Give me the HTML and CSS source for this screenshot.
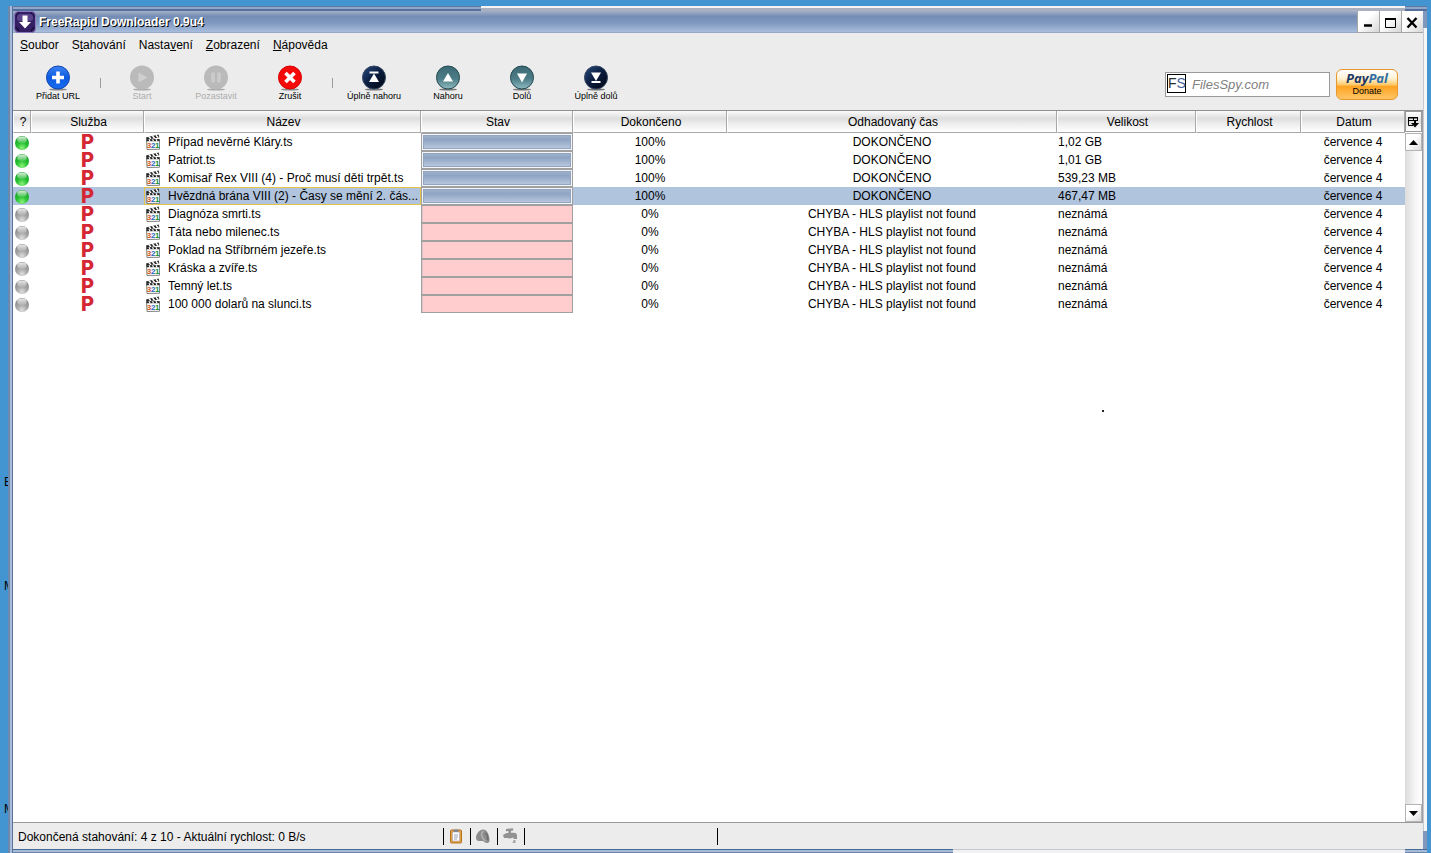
FILE: index.html
```html
<!DOCTYPE html>
<html lang="cs">
<head>
<meta charset="utf-8">
<title>FreeRapid Downloader 0.9u4</title>
<link rel="stylesheet" href="styles.css">
</head>
<body>
<svg class="defs" width="0" height="0" aria-hidden="true">
  <defs>
    <linearGradient id="gAdd" x1="0" y1="0" x2="0" y2="1"><stop offset="0" stop-color="#3d83f2"/><stop offset=".5" stop-color="#0d5be0"/><stop offset="1" stop-color="#1a6df0"/></linearGradient>
    <linearGradient id="gNavy" x1="0" y1="0" x2="1" y2="1"><stop offset="0" stop-color="#2a4a80"/><stop offset=".5" stop-color="#0a1c3e"/><stop offset="1" stop-color="#020510"/></linearGradient>
    <linearGradient id="gTeal" x1="0" y1="0" x2="0" y2="1"><stop offset="0" stop-color="#3c6a74"/><stop offset=".55" stop-color="#4c7c86"/><stop offset="1" stop-color="#8fbcc2"/></linearGradient>
    <radialGradient id="gGreen" cx=".5" cy=".85" r=".85"><stop offset="0" stop-color="#8df27c"/><stop offset=".45" stop-color="#27c232"/><stop offset="1" stop-color="#169a25"/></radialGradient>
    <radialGradient id="gGray" cx=".5" cy=".85" r=".85"><stop offset="0" stop-color="#dedede"/><stop offset=".45" stop-color="#a6a6a6"/><stop offset="1" stop-color="#808080"/></radialGradient>
    <linearGradient id="gShine" x1="0" y1="0" x2="0" y2="1"><stop offset="0" stop-color="#fff" stop-opacity=".85"/><stop offset="1" stop-color="#fff" stop-opacity=".15"/></linearGradient>
  </defs>
  <symbol id="ball-ok" viewBox="0 0 16 16"><circle cx="9" cy="8" r="7" fill="url(#gGreen)"/><ellipse cx="9" cy="4.700" rx="4.800" ry="3.200" fill="url(#gShine)"/></symbol>
  <symbol id="ball-err" viewBox="0 0 16 16"><circle cx="9" cy="8" r="7" fill="url(#gGray)"/><ellipse cx="9" cy="4.700" rx="4.800" ry="3.200" fill="url(#gShine)"/></symbol>
  <symbol id="clip" viewBox="0 0 16 16">
    <path d="M1 3.400 13.600.6l.7 2.600L1.600 6z" fill="#222"/>
    <path d="M4 2.800l2 2.300M7.500 2l2 2.300M11 1.200l2 2.300" stroke="#fff" stroke-width="1.500"/>
    <path d="M1.500 5.500h13v9.800l-12.500.2z" fill="#fafafa" stroke="#777" stroke-width=".9"/>
    <path d="M1.500 5.300h13v1.900h-13z" fill="#222"/>
    <path d="M4 5.300l1 1.900M7.500 5.300l1 1.900M11 5.300l1 1.900" stroke="#fff" stroke-width="1.200"/>
    <g font-family="Liberation Sans, sans-serif" font-weight="bold" font-size="8"><text x="1.800" y="14" fill="#d0581a">3</text><text x="6" y="14" fill="#2a66c0">2</text><text x="10" y="14" fill="#129038">1</text></g>
  </symbol>
</svg>

<span class="desk-label label-a">E</span>
<span class="desk-label label-b">M</span>
<span class="desk-label label-c">M</span>

<main class="window">
  <header class="titlebar">
    <svg class="app-icon" viewBox="0 0 22 22" width="22" height="22" aria-hidden="true">
      <rect x=".5" y=".5" width="21" height="21" rx="4" fill="#342062" stroke="#8d7cc0"/>
      <path d="M2 6l3-4M20 6l-3-4M2 16l3 4M20 16l-3 4" stroke="#1c1040" stroke-width="1.500"/>
      <rect x="3" y="3" width="16" height="7" rx="3" fill="#5a448c"/>
      <path d="M8.500 4.500h5V11H17l-6 6.500L5 11h3.500z" fill="#fff"/>
    </svg>
    <h1>FreeRapid Downloader 0.9u4</h1>
    <div class="win-buttons">
      <button aria-label="Minimalizovat"><svg viewBox="0 0 22 22" width="22" height="22"><path d="M6 14.500h8" stroke="#000" stroke-width="2.500"/></svg></button>
      <button aria-label="Maximalizovat"><svg viewBox="0 0 22 22" width="22" height="22"><path d="M5.500 8v8.500h10V8" stroke="#000" fill="none"/><path d="M5 8h11" stroke="#000" stroke-width="2"/></svg></button>
      <button aria-label="Zavřít"><svg viewBox="0 0 22 22" width="22" height="22"><path d="M5.500 7l9 9.500M14.500 7l-9 9.500" stroke="#000" stroke-width="2.400"/></svg></button>
    </div>
  </header>

  <nav class="menubar">
    <button><u>S</u>oubor</button><button>S<u>t</u>ahování</button><button>Nasta<u>v</u>ení</button><button><u>Z</u>obrazení</button><button><u>N</u>ápověda</button>
  </nav>

  <section class="toolbar">
    <button class="tool"><svg viewBox="0 0 26 26" width="26" height="26"><ellipse cx="13" cy="24.500" rx="9" ry="1" fill="#888"/><circle cx="13" cy="12.500" r="11.500" fill="url(#gAdd)" stroke="#1048b0"/><path d="M13 6.500v12M7 12.500h12" stroke="#fff" stroke-width="3.600"/></svg><span>Přidat URL</span></button>
    <i class="sep"></i>
    <button class="tool" disabled><svg viewBox="0 0 26 26" width="26" height="26"><ellipse cx="13" cy="24.500" rx="9" ry="1" fill="#aaa"/><circle cx="13" cy="12.500" r="12" fill="#bababa"/><path d="M9.500 7.500l9 5-9 5z" fill="#cfcfcf"/></svg><span>Start</span></button>
    <button class="tool" disabled><svg viewBox="0 0 26 26" width="26" height="26"><ellipse cx="13" cy="24.500" rx="9" ry="1" fill="#aaa"/><circle cx="13" cy="12.500" r="12" fill="#bababa"/><path d="M10 7.500v10M16 7.500v10" stroke="#cbcbcb" stroke-width="3.500"/></svg><span>Pozastavit</span></button>
    <button class="tool"><svg viewBox="0 0 26 26" width="26" height="26"><ellipse cx="13" cy="24.500" rx="9" ry="1" fill="#888"/><circle cx="13" cy="12.500" r="11.500" fill="#f50a0a" stroke="#d80000"/><path d="M8.500 8l9 9M17.500 8l-9 9" stroke="#fff" stroke-width="3.600"/></svg><span>Zrušit</span></button>
    <i class="sep"></i>
    <button class="tool"><svg viewBox="0 0 26 26" width="26" height="26"><ellipse cx="13" cy="24.500" rx="9" ry="1" fill="#777"/><circle cx="13" cy="12.500" r="11.500" fill="url(#gNavy)" stroke="#33465f"/><path d="M8.500 6.500h9v2h-9zM13 8.500l5 8.500H8z" fill="#fff"/></svg><span>Úplně nahoru</span></button>
    <button class="tool"><svg viewBox="0 0 26 26" width="26" height="26"><ellipse cx="13" cy="24.500" rx="9" ry="1" fill="#777"/><circle cx="13" cy="12.500" r="11.500" fill="url(#gTeal)" stroke="#23474f"/><path d="M13 8l5 8.500H8z" fill="#fff"/></svg><span>Nahoru</span></button>
    <button class="tool"><svg viewBox="0 0 26 26" width="26" height="26"><ellipse cx="13" cy="24.500" rx="9" ry="1" fill="#777"/><circle cx="13" cy="12.500" r="11.500" fill="url(#gTeal)" stroke="#23474f"/><path d="M13 17.500l5-9H8z" fill="#fff"/></svg><span>Dolů</span></button>
    <button class="tool"><svg viewBox="0 0 26 26" width="26" height="26"><ellipse cx="13" cy="24.500" rx="9" ry="1" fill="#777"/><circle cx="13" cy="12.500" r="11.500" fill="url(#gNavy)" stroke="#33465f"/><path d="M8.500 16h9v2h-9zM13 16l5-8.500H8z" fill="#fff"/></svg><span>Úplně dolů</span></button>
    <label class="search"><span class="fs"><b>F</b>S</span><input type="text" placeholder="FilesSpy.com" aria-label="Hledat na FilesSpy.com"></label>
    <button class="donate"><strong>Pay<em>Pal</em></strong><span>Donate</span></button>
  </section>

  <section class="list">
    <div class="table-area">
      <table>
        <colgroup><col class="c-state"><col class="c-service"><col class="c-name"><col class="c-bar"><col class="c-done"><col class="c-eta"><col class="c-size"><col class="c-speed"><col class="c-date"></colgroup>
        <thead><tr><th>?</th><th>Služba</th><th>Název</th><th>Stav</th><th>Dokončeno</th><th>Odhadovaný čas</th><th>Velikost</th><th>Rychlost</th><th>Datum</th></tr></thead>
        <tbody>
          <tr><td><svg class="ball"><use href="#ball-ok"/></svg></td><td class="service">P</td><td class="name"><div><svg><use href="#clip"/></svg><span>Případ nevěrné Kláry.ts</span></div></td><td class="bar"><div class="full"></div></td><td>100%</td><td>DOKONČENO</td><td class="size">1,02 GB</td><td></td><td>července 4</td></tr>
          <tr><td><svg class="ball"><use href="#ball-ok"/></svg></td><td class="service">P</td><td class="name"><div><svg><use href="#clip"/></svg><span>Patriot.ts</span></div></td><td class="bar"><div class="full"></div></td><td>100%</td><td>DOKONČENO</td><td class="size">1,01 GB</td><td></td><td>července 4</td></tr>
          <tr><td><svg class="ball"><use href="#ball-ok"/></svg></td><td class="service">P</td><td class="name"><div><svg><use href="#clip"/></svg><span>Komisař Rex VIII (4) - Proč musí děti trpět.ts</span></div></td><td class="bar"><div class="full"></div></td><td>100%</td><td>DOKONČENO</td><td class="size">539,23 MB</td><td></td><td>července 4</td></tr>
          <tr class="selected"><td><svg class="ball"><use href="#ball-ok"/></svg></td><td class="service">P</td><td class="name"><div><svg><use href="#clip"/></svg><span>Hvězdná brána VIII (2) - Časy se mění 2. čás...</span></div></td><td class="bar"><div class="full"></div></td><td>100%</td><td>DOKONČENO</td><td class="size">467,47 MB</td><td></td><td>července 4</td></tr>
          <tr><td><svg class="ball"><use href="#ball-err"/></svg></td><td class="service">P</td><td class="name"><div><svg><use href="#clip"/></svg><span>Diagnóza smrti.ts</span></div></td><td class="bar"><div class="empty"></div></td><td>0%</td><td>CHYBA - HLS playlist not found</td><td class="size">neznámá</td><td></td><td>července 4</td></tr>
          <tr><td><svg class="ball"><use href="#ball-err"/></svg></td><td class="service">P</td><td class="name"><div><svg><use href="#clip"/></svg><span>Táta nebo milenec.ts</span></div></td><td class="bar"><div class="empty"></div></td><td>0%</td><td>CHYBA - HLS playlist not found</td><td class="size">neznámá</td><td></td><td>července 4</td></tr>
          <tr><td><svg class="ball"><use href="#ball-err"/></svg></td><td class="service">P</td><td class="name"><div><svg><use href="#clip"/></svg><span>Poklad na Stříbrném jezeře.ts</span></div></td><td class="bar"><div class="empty"></div></td><td>0%</td><td>CHYBA - HLS playlist not found</td><td class="size">neznámá</td><td></td><td>července 4</td></tr>
          <tr><td><svg class="ball"><use href="#ball-err"/></svg></td><td class="service">P</td><td class="name"><div><svg><use href="#clip"/></svg><span>Kráska a zvíře.ts</span></div></td><td class="bar"><div class="empty"></div></td><td>0%</td><td>CHYBA - HLS playlist not found</td><td class="size">neznámá</td><td></td><td>července 4</td></tr>
          <tr><td><svg class="ball"><use href="#ball-err"/></svg></td><td class="service">P</td><td class="name"><div><svg><use href="#clip"/></svg><span>Temný let.ts</span></div></td><td class="bar"><div class="empty"></div></td><td>0%</td><td>CHYBA - HLS playlist not found</td><td class="size">neznámá</td><td></td><td>července 4</td></tr>
          <tr><td><svg class="ball"><use href="#ball-err"/></svg></td><td class="service">P</td><td class="name"><div><svg><use href="#clip"/></svg><span>100 000 dolarů na slunci.ts</span></div></td><td class="bar"><div class="empty"></div></td><td>0%</td><td>CHYBA - HLS playlist not found</td><td class="size">neznámá</td><td></td><td>července 4</td></tr>
        </tbody>
      </table>
      <i class="speck"></i>
    </div>
    <aside class="side">
      <button class="columns" aria-label="Sloupce"><svg viewBox="0 0 15 20" width="15" height="20"><path d="M11.500 9V5.500h-9v8H7M2 8.500h10M7.500 5v4" stroke="#000" fill="none"/><path d="M2 5h10v1.500H2zM5 11h8l-4 4.500zM8 9h2v2H8z"/></svg></button>
      <button class="arrow" aria-label="Nahoru"><svg viewBox="0 0 9 5" width="9" height="5"><path d="M0 5h9L4.500 0z"/></svg></button>
      <div class="track"></div>
      <button class="arrow" aria-label="Dolů"><svg viewBox="0 0 9 5" width="9" height="5"><path d="M0 0h9L4.500 5z"/></svg></button>
    </aside>
  </section>

  <footer class="status">
    <span class="summary">Dokončená stahování: 4 z 10 - Aktuální rychlost: 0 B/s</span>
    <span class="cell"><svg viewBox="0 0 16 16" width="16" height="16"><rect x="2.500" y="2" width="11" height="13" rx="1" fill="#e3a042" stroke="#b87321"/><rect x="4.500" y="4" width="7" height="9" fill="#fff" stroke="#a9a9b4" stroke-width=".6"/><path d="M6 7h4M6 9h4M6 11h3" stroke="#9aa0b8"/><path d="M5.500 1.500h5V4h-5z" fill="#88888c"/></svg></span>
    <span class="cell"><svg viewBox="0 0 16 16" width="16" height="16"><path d="M1 10c0-4 3-8 7-8.500 4 0 6 5 6.500 9.500.3 2.500-.5 4-2.500 4-2 0-3-1.500-4-2-2-.3-7 1-7-3z" fill="#8c8c8c"/><path d="M8.500 3c-3 2-2.500 7 2 10" stroke="#b4b4b4" fill="none" stroke-width="1.500"/><path d="M10.500 5c2 2 2.500 5 2 7" stroke="#6c6c6c" fill="none" stroke-width="1.500"/></svg></span>
    <span class="cell"><svg viewBox="0 0 16 16" width="16" height="16"><path d="M4 1l7-.8.3 2.200-2.300.4v2h3c2 0 3 1.200 3 3V11h-3.500V9.500L8 10.500 5 10H2L1 7l3.500-2H6.500V3L4 3.300z" fill="#929292"/><path d="M11.500 12h2v3h-3z" fill="#a5a5a5"/></svg></span>
    <span class="cell wide"></span>
    <span class="cell"></span>
  </footer>
</main>
</body>
</html>
```
FILE: styles.css
```css
* { box-sizing: border-box; }
body {
  margin: 0;
  height: 100vh;
  padding: 6px 4px 0 8px;
  background: #4395d1;
  overflow: hidden;
  position: relative;
  font: 12px/18px "Liberation Sans", Arial, sans-serif;
  color: #000;
}
button { font: inherit; color: inherit; border: 0; padding: 0; background: none; }
svg { display: block; }
.defs { position: absolute; }

.desk-label { position: absolute; left: 4px; }
.label-a { top: 473px; }
.label-b { top: 577px; }
.label-c { top: 800px; }

/* frame: blue by default, pale along part of the top, right and bottom */
.window {
  position: relative;
  height: 100%;
  display: flex;
  flex-direction: column;
  padding: 5px 4px 4px 5px;
  background:
    linear-gradient(#f4f4f4 0 2px, #a9b0c0 2px 5px) 473px 0 / calc(100% - 495px) 5px no-repeat,
    linear-gradient(90deg, #c4c8d0 0 1px, #f6f6f6 1px) 100% 22px / 4px calc(100% - 44px) no-repeat,
    linear-gradient(#c4c8d0 0 1px, #f2f2f2 1px) calc(100% - 22px) 100% / calc(100% - 967px) 4px no-repeat,
    linear-gradient(90deg, #6f87ab 0 2px, #a9bddb 2px 4px, #5b7398 4px 5px, transparent 5px) 0 0 / 5px 100% no-repeat,
    linear-gradient(#6079a3 0 1px, #8fa7cb 1px 3px, #546f9c 3px) 0 0 / 100% 5px no-repeat,
    linear-gradient(#466a94 0 1px, #a3bad8 1px 3px, #6f87ab 3px) 0 100% / 100% 4px no-repeat,
    #7f97bd;
}

.titlebar {
  flex: none;
  display: flex;
  align-items: center;
  height: 22px;
  padding-left: 1px;
  background: linear-gradient(#a4b0c8 0, #748db5 25%, #8199c0 55%, #a7bcdb 94%, #8c9dbc);
}
.titlebar h1 {
  flex: 1;
  margin: 0 0 0 3px;
  font-size: 12px;
  font-weight: bold;
  color: #fff;
  text-shadow: 1px 1px 0 #000;
}
.win-buttons { display: flex; }
.win-buttons button {
  width: 22px;
  height: 22px;
  background: linear-gradient(135deg, #fff 40%, #d6d6d6);
  border-left: 1px solid #a5a5a5;
  border-bottom: 1px solid #a5a5a5;
}

.menubar {
  flex: none;
  display: flex;
  gap: 13px;
  height: 24px;
  padding-left: 7px;
  align-items: center;
  background: #ececec;
}

.toolbar {
  flex: none;
  display: flex;
  height: 53px;
  padding: 0 25px 0 8px;
  background: #ececec;
}
.tool {
  flex: none;
  width: 74px;
  padding-top: 8px;
  display: flex;
  flex-direction: column;
  align-items: center;
  font-size: 9px;
  line-height: 11px;
}
.tool:disabled { color: #acacac; }
.sep { flex: none; width: 1px; height: 10px; margin: 21px 4px 0 5px; background: #9c9c9c; }

.search {
  display: flex;
  align-items: center;
  width: 165px;
  height: 25px;
  margin: 15px 6px 0 auto;
  padding: 1px;
  border: 1px solid #9a9a9a;
  background: #fff;
}
.fs {
  flex: none;
  align-self: flex-start;
  width: 19px;
  height: 19px;
  border: 1px solid #000;
  font-size: 14px;
  line-height: 17px;
  text-align: center;
  color: #3f5f9b;
}
.fs b { font-weight: normal; color: #1f2f2a; }
.search input {
  min-width: 0;
  flex: 1;
  margin-left: 6px;
  padding: 0;
  border: 0;
  outline: 0;
  background: none;
  font: italic 13px/18px "Liberation Sans", Arial, sans-serif;
}
.search input::placeholder { color: #808080; }
.donate {
  width: 62px;
  height: 31px;
  margin-top: 12px;
  border: 1px solid #e8982a;
  border-radius: 6px;
  background: linear-gradient(#fff 0, #fff1d2 30%, #ffc763 52%, #ffa322 56%, #ffc566 100%);
  display: flex;
  flex-direction: column;
  align-items: center;
  font-size: 9px;
  line-height: 11px;
}
.donate strong { font: italic bold 13px/16px "Open Sans", sans-serif; color: #1c3765; }
.donate em { color: #2d6fa5; }

.list {
  flex: 1;
  min-height: 0;
  display: flex;
  border-top: 1px solid #8f8f8f;
  border-bottom: 1px solid #9a9a9a;
  background: #fff;
}
.table-area { flex: 1; min-width: 0; position: relative; overflow: hidden; }
.speck { position: absolute; left: 1089px; top: 299px; width: 2px; height: 2px; background: #222; }

table { width: 100%; table-layout: fixed; border-collapse: separate; border-spacing: 0; }
.c-state { width: 18px; }
.c-service { width: 113px; }
.c-name { width: 277px; }
.c-bar { width: 152px; }
.c-done { width: 154px; }
.c-size { width: 139px; }
.c-speed { width: 105px; }
.c-date { width: 104px; }
th {
  height: 22px;
  padding: 1px 0 0 2px;
  line-height: 20px;
  font-weight: normal;
  border-left: 1px solid #fff;
  border-right: 1px solid #a8a8a8;
  border-bottom: 1px solid #a8a8a8;
  background: linear-gradient(#fbfbfb, #dedede 35%, #efefef 65%, #fff);
}
td { height: 18px; padding: 1px 0 0; text-align: center; line-height: 17px; white-space: nowrap; overflow: hidden; }
.selected td { background: #b0c4de; }
.ball { width: 16px; height: 16px; }
.service { padding: 0; font: 800 20px/18px Inter, "Liberation Sans", sans-serif; color: #d42733; }
td.name, td.bar { padding: 0; }
.name div { display: flex; align-items: center; height: 18px; padding-left: 1px; gap: 7px; }
.name span { padding-top: 1px; }
.name svg { flex: none; width: 16px; height: 16px; }
.selected .name div { outline: 1px solid #e3c34c; outline-offset: -1px; }
.bar div { height: 18px; border: 1px solid #a0a0a0; }
.full {
  background: linear-gradient(#a8b9d0, #8ea4c3 35%, #c0cee2);
  box-shadow: inset 0 0 0 1px #f4f6fa, inset 0 0 0 2px #94a5c2;
}
.empty { background: #ffcdcd; box-shadow: inset 1px 0 0 #ddc4cb; }
td.size { text-align: left; padding-left: 1px; }

.side { flex: none; width: 18px; display: flex; flex-direction: column; border-right: 1px solid #a0a0a0; }
.columns { height: 21px; margin-bottom: 1px; border: 1px solid #999; background: linear-gradient(#fff, #e0e0e0 50%, #fff); }
.arrow {
  flex: none;
  height: 18px;
  display: flex;
  align-items: center;
  justify-content: center;
  border: 1px solid #b4b4b4;
  background: linear-gradient(135deg, #fff 40%, #dcdcdc);
}
.track { flex: 1; background: linear-gradient(90deg, #dcdcdc, #f6f6f6 60%, #fff); }

.status {
  flex: none;
  display: flex;
  align-items: center;
  height: 26px;
  padding-left: 5px;
  background: #ececec;
}
.summary { width: 425px; padding-top: 1px; }
.cell {
  width: 27px;
  height: 17px;
  padding-left: 4px;
  border-left: 1px solid #000;
}
.wide { width: 193px; }
```
